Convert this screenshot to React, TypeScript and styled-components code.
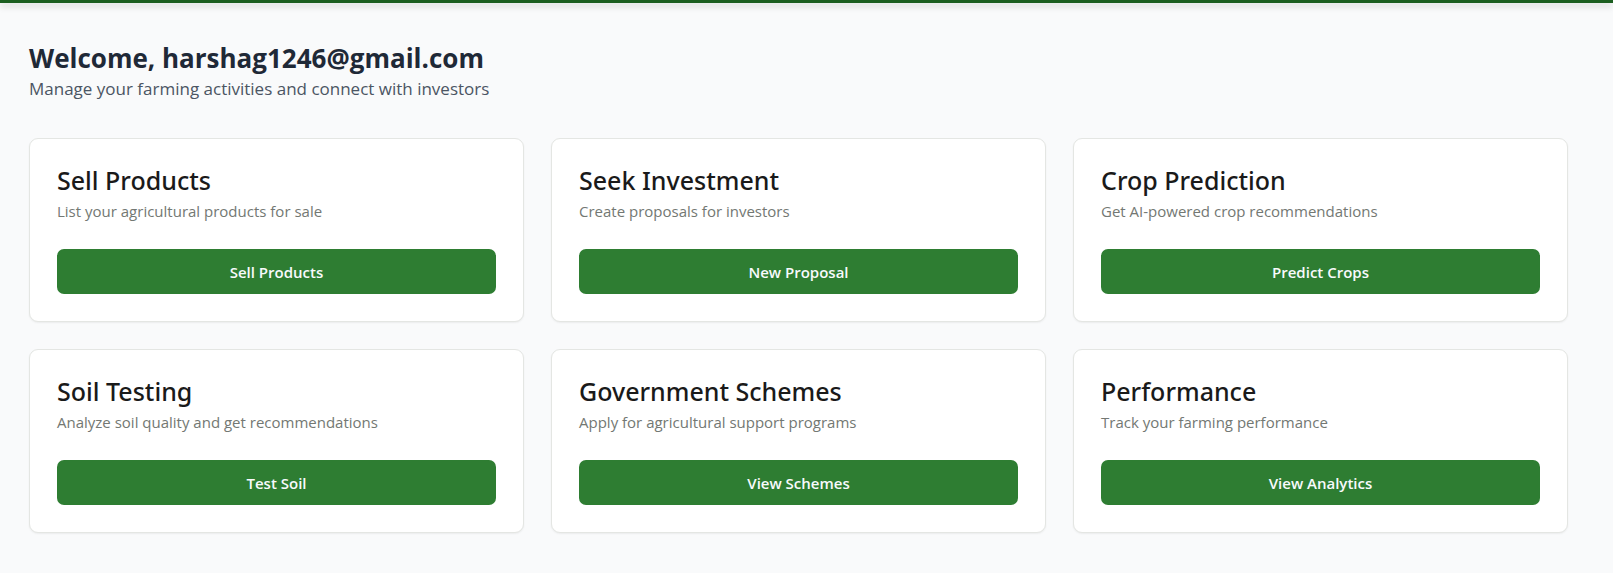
import React from "react";
import styled, { createGlobalStyle } from "styled-components";

const GlobalStyle = createGlobalStyle`
  *, *::before, *::after { box-sizing: border-box; }
  body {
    margin: 0;
    background: #f9fafb;
    font-family: "Open Sans", "Noto Sans", sans-serif;
    color: #1a1a1a;
  }
  h1, h2, p { margin: 0; }
`;

const TopBar = styled.header`
  height: 3px;
  background: #1b5e20;
  box-shadow: 0 3px 7px rgba(0, 0, 0, 0.2);
`;

const Page = styled.main`
  padding: 37px 45px 40px 29px;
`;

const Title = styled.h1`
  font-size: 26px;
  line-height: 36px;
  font-weight: 700;
  color: #1f2937;
`;

const Subtitle = styled.p`
  font-size: 17px;
  line-height: 26px;
  color: #4b5563;
  margin-bottom: 36px;
`;

const Grid = styled.div`
  display: grid;
  grid-template-columns: repeat(3, minmax(0, 1fr));
  gap: 27px;
`;

const Card = styled.section`
  background: #ffffff;
  border: 1px solid #e4e6e3;
  border-radius: 9px;
  padding: 27px;
  box-shadow: 0 1px 2px rgba(0, 0, 0, 0.06);
`;

const CardTitle = styled.h2`
  font-family: "Noto Sans", sans-serif;
  font-size: 25px;
  line-height: 28px;
  font-weight: 500;
`;

const CardText = styled.p`
  font-size: 15px;
  line-height: 22px;
  margin: 6px 0 27px;
  color: #737873;
`;

const Action = styled.button`
  display: block;
  width: 100%;
  height: 45px;
  border: 0;
  border-radius: 7px;
  background: #2e7d32;
  color: #f8fafc;
  font: inherit;
  font-size: 15px;
  font-weight: 600;
  cursor: pointer;
`;

const cards = [
  { title: "Sell Products", text: "List your agricultural products for sale", action: "Sell Products" },
  { title: "Seek Investment", text: "Create proposals for investors", action: "New Proposal" },
  { title: "Crop Prediction", text: "Get AI-powered crop recommendations", action: "Predict Crops" },
  { title: "Soil Testing", text: "Analyze soil quality and get recommendations", action: "Test Soil" },
  { title: "Government Schemes", text: "Apply for agricultural support programs", action: "View Schemes" },
  { title: "Performance", text: "Track your farming performance", action: "View Analytics" },
];

export default function App() {
  return (
    <>
      <GlobalStyle />
      <TopBar />
      <Page>
        <Title>Welcome, harshag1246@gmail.com</Title>
        <Subtitle>Manage your farming activities and connect with investors</Subtitle>
        <Grid>
          {cards.map((card) => (
            <Card key={card.title}>
              <CardTitle>{card.title}</CardTitle>
              <CardText>{card.text}</CardText>
              <Action type="button">{card.action}</Action>
            </Card>
          ))}
        </Grid>
      </Page>
    </>
  );
}
